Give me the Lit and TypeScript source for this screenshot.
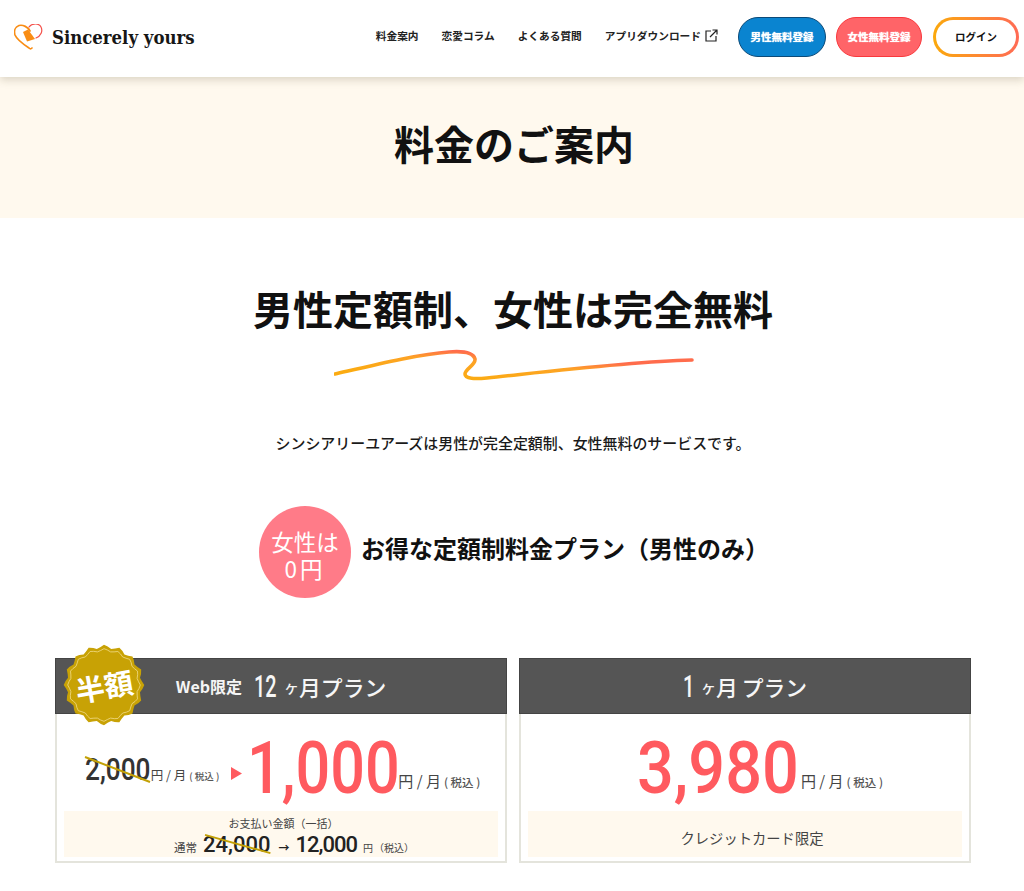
import { LitElement, html, css } from "lit";
import { customElement } from "lit/decorators.js";

function burst(cx: number, cy: number, r: number, amp: number, n: number) {
  let d = "";
  const steps = n * 2;
  for (let i = 0; i < steps; i++) {
    const a = (i / steps) * Math.PI * 2;
    const a2 = ((i + 1) / steps) * Math.PI * 2;
    const rr = i % 2 === 0 ? r + amp : r - amp;
    const r2 = i % 2 === 0 ? r - amp : r + amp;
    const x = cx + rr * Math.cos(a), y = cy + rr * Math.sin(a);
    const x2 = cx + r2 * Math.cos(a2), y2 = cy + r2 * Math.sin(a2);
    const m = (a + a2) / 2, rm = r + (i % 2 === 0 ? amp * 0.4 : -amp * 0.4);
    const qx = cx + rm * Math.cos(m), qy = cy + rm * Math.sin(m);
    if (i === 0) d += `M${x.toFixed(1)} ${y.toFixed(1)}`;
    d += `Q${qx.toFixed(1)} ${qy.toFixed(1)} ${x2.toFixed(1)} ${y2.toFixed(1)}`;
  }
  return d + "Z";
}

const yen = html`<span class="unit">円 / 月</span><span class="tax">( 税込 )</span>`;

@customElement("app-root")
export class AppRoot extends LitElement {
  static styles = css`
    :host { display: block; width: 1024px; height: 891px; overflow: hidden; background: #fff;
      font-family: "Noto Sans CJK JP", "Noto Sans", sans-serif; color: #111; }
    header { position: relative; z-index: 2; height: 77px; box-sizing: border-box; display: flex; align-items: center;
      padding: 0 5px 3px 14px; background: #fff; box-shadow: 0 3px 8px rgba(90,80,50,.22); }
    .logo { display: flex; align-items: center; gap: 9px; flex: 1; }
    .logo svg { width: 29px; height: 27px; display: block; }
    .logo b { font-family: "DejaVu Serif", serif; font-weight: 700; font-stretch: condensed; font-size: 18.4px; color: #161616; }
    nav { display: flex; align-items: center; gap: 23px; font-size: 10.7px; font-weight: 700; color: #222; margin: 0 20px 4px 0; }
    nav span { display: flex; align-items: center; gap: 4px; }
    nav svg { width: 13px; height: 13px; }
    .btns { display: flex; gap: 10px; }
    .btn { width: 86px; height: 40px; box-sizing: border-box; border-radius: 20px; display: flex; align-items: center; justify-content: center;
      font-size: 10.5px; font-weight: 700; padding-bottom: 1px; }
    .male { width: 88px; background: #0a84d0; color: #fff; border: 1.5px solid #0b4a78; text-shadow: 0 0 1px #fff; }
    .female { background: #ff6468; color: #fff; border: 1.5px solid #f9383c; text-shadow: 0 0 1px #fff; }
    .login { color: #111; background: linear-gradient(#fff,#fff) padding-box, linear-gradient(90deg,#fba90c,#ff6a55) border-box; border: 3px solid transparent; margin-left: 1px; }
    .hero { height: 141px; box-sizing: border-box; padding: 0 0 9px 4px; background: #fff9ee; display: flex; align-items: center; justify-content: center; }
    h1 { margin: 0; font-size: 40px; font-weight: 700; line-height: 1; color: #111; }
    .lead { display: flex; flex-direction: column; align-items: center; padding-top: 67px; }
    h2 { margin: 0; font-size: 40px; font-weight: 700; line-height: 46px; color: #111; padding-left: 2px; }
    .wave { display: block; width: 362px; height: 34px; margin: 17px 0 0 5px; }
    .lead p { margin: 50px 0 0; font-size: 14.95px; line-height: 22px; font-weight: 500; color: #1a1a1a; padding-left: 2px; }
    .plan-head { display: flex; align-items: center; justify-content: center; gap: 10px; margin: 52px 0 0; padding-left: 4px; }
    .circle { width: 92px; height: 92px; box-sizing: border-box; padding-top: 6px; border-radius: 50%; background: #ff7b88; color: #fff; display: flex; align-items: center; justify-content: center;
      text-align: center; font-size: 22.5px; line-height: 27px; font-weight: 400; }
    .circle em { font-style: normal; letter-spacing: 3px; }
    h3 { margin: 0; font-size: 24px; font-weight: 700; color: #111; line-height: 34px; padding-bottom: 9px; }
    .cards { display: grid; grid-template-columns: 452px 452px; gap: 12px; padding: 60px 0 0 55px; }
    .card { position: relative; height: 205px; box-sizing: border-box; border: 2px solid #e4e4dc; border-top: 0; display: flex; flex-direction: column; }
    .head { height: 56px; margin: 0 -2px; background: #555; color: #f6f6f6; display: flex; align-items: center; justify-content: center;
      border: 1px solid #444; box-sizing: border-box; }
    .head small { font-size: 16px; font-weight: 700; color: #f5f5f5; margin: 0 12px 0 0; }
    .head .ttl { font-size: 21.8px; font-weight: 500; display: flex; align-items: center; white-space: nowrap; }
    .head .n { font: 500 32px/32px "Roboto", sans-serif; display: inline-block; width: 22px; }
    .head .n span { display: inline-block; transform: scaleX(.62); transform-origin: left; }
    .head .n.one { width: 10px; }
    .head i { font-style: normal; font-size: 15px; margin: 0 0 0 8px; }
    .head .gap { width: 4px; }
    .badge { position: absolute; left: 5px; top: -15px; width: 84px; height: 84px; }
    .badge svg { display: block; width: 84px; height: 84px; }
    .badge b { position: absolute; inset: 0; display: flex; align-items: center; justify-content: center; color: #fff; font-size: 29px; font-weight: 700;
      transform: rotate(-10deg); }
    .prices { height: 95px; box-sizing: border-box; padding: 15px 0 0 3px; display: flex; align-items: baseline; justify-content: center; color: #444; }
    .prices.single { padding-left: 30px; }
    .oldgroup { display: flex; align-items: baseline; align-self: flex-start; margin-top: 21px; }
    .big { font: 500 72px "Roboto", sans-serif; color: #ff5a5f; line-height: 80px; display: inline-block; width: 150px; white-space: nowrap; }
    .big span { display: inline-block; transform: scaleX(.85); transform-origin: left; }
    .big.w3 { width: 163px; }
    .big.w3 span { transform: scaleX(.9); }
    .unit { font-size: 15px; color: #444; margin-left: 1px; white-space: nowrap; transform: translateY(-6px); }
    .tax { font-size: 11.5px; color: #555; margin-left: 3px; white-space: nowrap; font-weight: 500; transform: translateY(-6px); }
    .unit.s { font-size: 12.5px; transform: none; }
    .tax.s { font-size: 9.5px; transform: none; }
    .old { position: relative; font: 500 32px "Roboto", sans-serif; color: #333; display: inline-block; width: 65px; white-space: nowrap; }
    .old span { display: inline-block; transform: scaleX(.82); transform-origin: left; }
    .slash { position: absolute; left: 0; top: 0; width: 100%; height: 100%; overflow: visible; pointer-events: none; }
    .tri { width: 11px; height: 13px; margin: 9px 5px 0 12px; align-self: center; }
    .panel { margin: 2px 7px 0; height: 46px; box-sizing: border-box; padding-top: 5px; background: #fff9ee; display: flex; flex-direction: column; align-items: center; color: #444; }
    .panel.center { justify-content: center; padding: 6px 0 0 14px; }
    .panel .l1 { font-size: 11px; line-height: 14px; padding-left: 5px; }
    .panel .l2 { display: flex; align-items: baseline; line-height: 24px; font-size: 11.5px; margin-top: 2px; padding-left: 26px; }
    .mid { position: relative; font: 500 22px "Roboto", sans-serif; color: #222; display: inline-block; white-space: nowrap; }
    .mid.tight { letter-spacing: -1px; }
    .arr { font-family: "Noto Sans CJK JP", sans-serif; font-size: 11px; font-weight: 700; margin: 0 6px 0 8px; color: #222; }
    .panel .only { font-size: 14.3px; color: #444; }
    .l2 .t { margin-right: 6px; }
    .l2 .y { margin-left: 6px; font-size: 10px; }
    .l2 .z { margin-left: 1px; font-size: 10px; }
  `;

  render() {
    return html`
      <header>
        <div class="logo">
          <svg viewBox="0 0 29 27" fill="none">
            <path d="M16 7C14 3 9 .5 5 1.500 1 3-.2 7 1 11c2 5 8 9 14 13 1 1 2 1 3 0" stroke="#f98d14" stroke-width="1.700" stroke-linecap="round"/>
            <path d="M15 3c3-4 10-4 12 0 2 4 0 9-5 11" stroke="#f4504a" stroke-width="1.200" stroke-linecap="round"/>
            <path d="M9 8l5-2.500 7 9.500-8 2.500z" fill="#f98d14"/>
          </svg>
          <b>Sincerely yours</b>
        </div>
        <nav>
          <span>料金案内</span><span>恋愛コラム</span><span>よくある質問</span>
          <span>アプリダウンロード
            <svg viewBox="0 0 13 13" fill="none" stroke="#222" stroke-width="1.200"><path d="M6 2H1v10h10V7"/><path d="M5 8l7-7M7.500 1H12v4.500"/></svg>
          </span>
        </nav>
        <div class="btns">
          <div class="btn male">男性無料登録</div>
          <div class="btn female">女性無料登録</div>
          <div class="btn login">ログイン</div>
        </div>
      </header>
      <div class="hero"><h1>料金のご案内</h1></div>
      <div class="lead">
        <h2>男性定額制、女性は完全無料</h2>
        <svg class="wave" viewBox="0 0 362 34" fill="none">
          <defs>
            <linearGradient id="w" gradientUnits="userSpaceOnUse" x1="120" y1="30" x2="122" y2="3">
              <stop offset="0" stop-color="#fbab12"/><stop offset=".65" stop-color="#fda325"/><stop offset="1" stop-color="#ff6c4c"/>
            </linearGradient>
          </defs>
          <path d="M1 26C40 17 85 6 115 4c12-1 24 0 26 7 1 6-10 10-10 15 0 5 10 5 22 4C210 24 290 14 358 12" stroke="url(#w)" stroke-width="3.600" stroke-linecap="round"/>
        </svg>
        <p>シンシアリーユアーズは男性が完全定額制、女性無料のサービスです。</p>
      </div>
      <div class="plan-head">
        <div class="circle"><div>女性は<br /><em>0円</em></div></div>
        <h3>お得な定額制料金プラン（男性のみ）</h3>
      </div>
      <div class="cards">
        <div class="card">
          <div class="head">
            <small>Web限定</small>
            <div class="ttl"><span class="n"><span>12</span></span><i>ヶ</i><span>月プラン</span></div>
          </div>
          <div class="badge">
            <svg viewBox="0 0 84 84">
              <path d="${burst(42, 42, 38.5, 1.8, 16)}" fill="#c8a205"/>
              <path d="${burst(42, 42, 35, 1.3, 16)}" fill="none" stroke="#f1dc8a" stroke-width=".8"/>
            </svg>
            <b>半額</b>
          </div>
          <div class="prices">
            <div class="oldgroup">
              <span class="old"><span>2,000</span>
                <svg class="slash" viewBox="0 0 65 38" fill="none"><path d="M0 7L65 32" stroke="#c3a106" stroke-width="2"/></svg>
              </span>
              <span class="unit s">円 / 月</span><span class="tax s">( 税込 )</span>
            </div>
            <svg class="tri" viewBox="0 0 11 13"><path d="M0 0l11 6.500L0 13z" fill="#ff5a5f"/></svg>
            <span class="big"><span>1,000</span></span>${yen}
          </div>
          <div class="panel">
            <div class="l1">お支払い金額（一括）</div>
            <div class="l2">
              <span class="t">通常</span>
              <span class="mid">24,000<svg class="slash" viewBox="0 0 66 26" fill="none"><path d="M0 3L68 22" stroke="#c3a106" stroke-width="2"/></svg></span>
              <span class="arr">→</span>
              <span class="mid tight">12,000</span>
              <span class="y">円</span><span class="z">（税込）</span>
            </div>
          </div>
        </div>
        <div class="card">
          <div class="head">
            <div class="ttl"><span class="n one"><span>1</span></span><i>ヶ</i><span>月</span><span class="gap"></span><span>プラン</span></div>
          </div>
          <div class="prices single"><span class="big w3"><span>3,980</span></span>${yen}</div>
          <div class="panel center"><div class="only">クレジットカード限定</div></div>
        </div>
      </div>
    `;
  }
}
